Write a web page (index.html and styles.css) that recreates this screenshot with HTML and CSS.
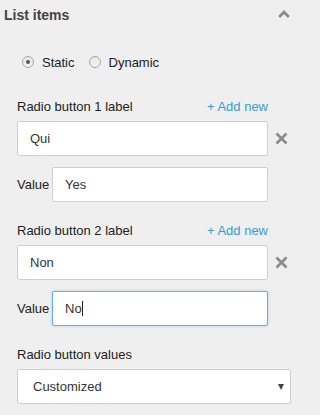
FILE: index.html
```html
<!DOCTYPE html>
<html>
<head>
<meta charset="utf-8">
<link rel="stylesheet" href="styles.css">
</head>
<body>
<div class="panel">
  <div class="header">
    <span class="title">List items</span>
    <svg class="chevron" width="12" height="8" viewBox="0 0 12 8"><polyline points="1.2,7 6,2 10.8,7" fill="none" stroke="#8a8a8a" stroke-width="2.6"/></svg>
  </div>
  <div class="content">
    <div class="radios">
      <span class="radio checked"></span><span class="radio-label">Static</span>
      <span class="radio"></span><span class="radio-label">Dynamic</span>
    </div>

    <div class="group">
      <div class="label-row"><span>Radio button 1 label</span><span class="add">+ Add new</span></div>
      <div class="field-row">
        <div class="field">Qui</div>
        <span class="remove"><svg width="13" height="13" viewBox="0 0 13 13"><path d="M1.5 1.5 L11.5 11.5 M11.5 1.5 L1.5 11.5" stroke="#8a8a8a" stroke-width="2.6"/></svg></span>
      </div>
      <div class="value-row"><span class="value-label">Value</span><div class="field">Yes</div></div>
    </div>

    <div class="group">
      <div class="label-row"><span>Radio button 2 label</span><span class="add">+ Add new</span></div>
      <div class="field-row">
        <div class="field">Non</div>
        <span class="remove"><svg width="13" height="13" viewBox="0 0 13 13"><path d="M1.5 1.5 L11.5 11.5 M11.5 1.5 L1.5 11.5" stroke="#8a8a8a" stroke-width="2.6"/></svg></span>
      </div>
      <div class="value-row"><span class="value-label">Value</span><div class="field focus">No<span class="caret"></span></div></div>
    </div>

    <div class="group">
      <div class="label-row"><span>Radio button values</span></div>
      <div class="select"><span>Customized</span><span class="arrow"></span></div>
    </div>
  </div>
</div>
</body>
</html>
```
FILE: styles.css
```css
html, body {
  margin: 0;
  padding: 0;
  background: #efefef;
}
body {
  font-family: "Liberation Sans", Arial, sans-serif;
  font-size: 13px;
  color: #333;
}
.panel {
  width: 305px;
}
.header {
  height: 28px;
  display: flex;
  align-items: center;
  justify-content: space-between;
  padding: 0 15px 0 4px;
}
.title {
  font-size: 14px;
  font-weight: bold;
  color: #444;
  line-height: 16px;
  padding-top: 2px;
}
.chevron {
  display: block;
  margin-top: -1px;
}
.content {
  padding: 24px 14px 0 17px;
}
.radios {
  height: 20px;
  display: flex;
  align-items: center;
  padding-left: 5px;
}
.radio {
  width: 10px;
  height: 10px;
  border-radius: 50%;
  border: 1px solid #a6a6a6;
  background: linear-gradient(#e6e6e6, #f4f4f4);
  position: relative;
  flex: none;
}
.radio.checked::after {
  content: "";
  position: absolute;
  left: 3px;
  top: 3px;
  width: 4px;
  height: 4px;
  border-radius: 50%;
  background: #555;
}
.radio-label {
  margin-left: 8px;
  margin-right: 14px;
  color: #222;
}
.group {
  margin-top: 26px;
}
.group + .group {
  margin-top: 20px;
}
.label-row {
  width: 251px;
  height: 17px;
  line-height: 17px;
  display: flex;
  justify-content: space-between;
  margin-bottom: 6px;
  color: #222;
}
.add {
  color: #3a9ad6;
}
.field-row {
  display: flex;
  align-items: center;
}
.field {
  box-sizing: border-box;
  height: 35px;
  width: 251px;
  flex: none;
  background: #fff;
  border: 1px solid #cfcfcf;
  border-radius: 2px;
  padding-left: 12px;
  display: flex;
  align-items: center;
  color: #333;
}
.field.focus {
  border-color: #66afe9;
  box-shadow: 0 0 3px rgba(102, 175, 233, 0.5);
}
.caret {
  display: inline-block;
  width: 1px;
  height: 15px;
  background: #222;
  margin-left: 0;
}
.remove {
  margin-left: 7px;
  display: flex;
}
.value-row {
  margin-top: 11px;
  width: 251px;
  display: flex;
  align-items: center;
}
.value-label {
  width: 35px;
  flex: none;
  color: #222;
}
.value-row .field {
  width: auto;
  flex: 1;
}
.select {
  box-sizing: border-box;
  height: 35px;
  background: #fff;
  border: 1px solid #cfcfcf;
  border-radius: 2px;
  padding: 0 6px 0 15px;
  display: flex;
  align-items: center;
  justify-content: space-between;
  color: #333;
}
.arrow {
  width: 0;
  height: 0;
  border-left: 3px solid transparent;
  border-right: 3px solid transparent;
  border-top: 6px solid #444;
  margin-top: 1px;
}
```
